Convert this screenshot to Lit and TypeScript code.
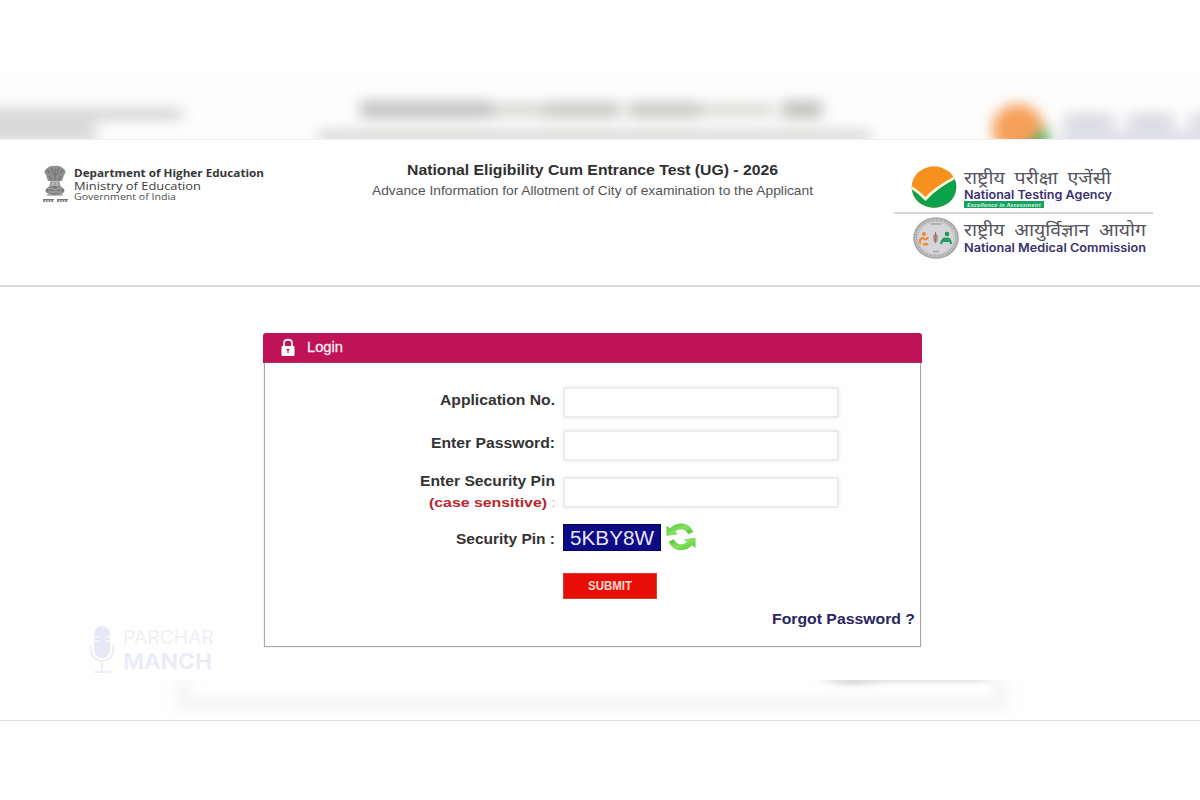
import { LitElement, html, css, svg } from "lit";
import { customElement } from "lit/decorators.js";

/* One line of text whose advance is stretched to a fixed width. */
const line = (text: string, width: number, height: number, base: number, cls: string) => html`
  <svg class="line" width=${width} height=${height} viewBox="0 0 ${width} ${height}">
    <text class=${cls} x="0" y=${base} textLength=${width} lengthAdjust="spacingAndGlyphs">${text}</text>
  </svg>`;

const emblem = html`
  <svg class="emblem" width="26" height="39" viewBox="0 0 26 39">
    <path d="M4 4Q8 0 13 1Q18 0 22 4Q25 7 22 10L20 16H6L4 10Q1 7 4 4Z" fill="#8f8f8f" />
    <path d="M5 5l3 3M21 5l-3 3M9 3l2 4M17 3l-2 4M7 11l3 4M19 11l-3 4M13 4v11M10 9h6" stroke="#707070" stroke-width="1.1" fill="none" />
    <path d="M8 16Q9 19 6 22H20Q17 19 18 16Z" fill="#b4b4b4" />
    <path d="M9 17v4M13 17v4M17 17v4" stroke="#8c8c8c" stroke-width="1" />
    <ellipse cx="13" cy="25.500" rx="9.500" ry="4.600" fill="#7c7c7c" />
    <path d="M6 24q3-2 5 0t4 0t5 0M6 27h14" stroke="#b5b5b5" stroke-width="1" fill="none" />
    <path d="M5 30h16" stroke="#8c8c8c" stroke-width="1.200" />
    <path d="M1 34.500h11M15 34.500h11" stroke="#777" stroke-width="1" />
    <path d="M1 36h11M15 36h11" stroke="#666" stroke-width="1.600" stroke-dasharray="2 .7" />
  </svg>`;

const ntaLogo = html`
  <svg class="nta-logo" width="46" height="42" viewBox="0 0 46 42">
    <defs><clipPath id="disc"><ellipse cx="23" cy="21" rx="22.300" ry="20.700" /></clipPath></defs>
    <g clip-path="url(#disc)">
      <rect width="46" height="42" fill="#f7911e" />
      <path d="M0 20L14.500 33L46 9V42H0Z" fill="#0ba24b" />
      <path d="M-1 20.500Q8 26 14.500 33Q24 22 46 10.500" fill="none" stroke="#fff9dc" stroke-width="2.800" />
    </g>
  </svg>`;

const nmcLogo = html`
  <svg class="nmc-logo" width="46" height="42" viewBox="0 0 46 42">
    <ellipse cx="23" cy="21" rx="22" ry="20" fill="#c9c9cb" stroke="#a6a6a8" stroke-width="1.600" />
    <ellipse cx="23" cy="21" rx="20" ry="18" fill="none" stroke="#a2a2a5" stroke-width="1.500" stroke-dasharray="1.500 1.200" />
    <ellipse cx="23" cy="21" rx="17.500" ry="15.500" fill="#d6d6d9" />
    <path d="M18 7h10M20 34.500h6" stroke="#a2a2a5" stroke-width="1.500" />
    <g fill="none" stroke-width="2.200">
      <path d="M7 27V23Q9 20 11 22Q14 23 15 20M10 28q3-2 5 0" stroke="#ef8b35" />
      <path d="M28 27Q30 20 33 22Q37 20 38 27M30 24h6" stroke="#1d9b62" />
    </g>
    <circle cx="11" cy="17" r="2.100" fill="#ef8b35" />
    <circle cx="34" cy="17" r="2.300" fill="#1d9b62" />
    <ellipse cx="22.500" cy="21" rx="2.300" ry="4.500" fill="#a98f86" />
    <path d="M22.500 15v11" stroke="#8b7a75" stroke-width="1" />
  </svg>`;

const lock = html`
  <svg class="lock" width="14" height="19" viewBox="0 0 14 19">
    <path d="M3 9V5Q3 1.800 7 1.800T11 5V9" fill="none" stroke="#fbe3ec" stroke-width="2" />
    <rect x="0.500" y="8" width="13" height="10" rx="1" fill="#fff" />
    <path d="M5.200 10.800h3.600L7.600 13v2H6.400v-2z" fill="#a3386a" />
  </svg>`;

const half = svg`
  <path d="M0.800 3.200L4 5.600Q8.500 0.700 15 0.700Q23.500 0.700 27 8.800L22.300 11Q19.800 5.900 15 5.900Q11 5.900 8.600 8.800L11.300 10.900L0.800 12.600Z"
    fill="url(#leaf)" stroke="#62cb43" stroke-width="0.500" />`;

const refresh = html`
  <svg class="refresh" width="30" height="28" viewBox="0 0 30 28">
    <defs>
      <linearGradient id="leaf" x1="0" y1="0" x2="1" y2="1">
        <stop offset="0" stop-color="#3fce2c" /><stop offset=".5" stop-color="#8be060" /><stop offset="1" stop-color="#43bf2e" />
      </linearGradient>
    </defs>
    ${half}
    <g transform="rotate(180 15 13.800)">${half}</g>
  </svg>`;

const topHaze = html`
  <svg class="haze" width="1200" height="65" viewBox="0 0 1200 65">
    <defs>
      <filter id="b6" filterUnits="userSpaceOnUse" x="-60" y="-40" width="1320" height="160" color-interpolation-filters="sRGB"><feGaussianBlur stdDeviation="7 6" /></filter>
      <filter id="b4" filterUnits="userSpaceOnUse" x="940" y="-20" width="160" height="140" color-interpolation-filters="sRGB"><feGaussianBlur stdDeviation="6.500" /></filter>
    </defs>
    <rect width="1200" height="65" fill="#fdfdfd" />
    <g filter="url(#b6)">
      <rect x="-40" y="32" width="222" height="14" fill="#dadada" />
      <rect x="-40" y="44" width="136" height="24" fill="#dadada" />
      <rect x="360" y="25" width="132" height="19" fill="#c8c8c8" />
      <rect x="492" y="27" width="52" height="16" fill="#dddddb" />
      <rect x="544" y="26" width="76" height="18" fill="#cfcfcd" />
      <rect x="628" y="26" width="72" height="18" fill="#cfcfcd" />
      <rect x="700" y="28" width="74" height="14" fill="#dededb" />
      <rect x="782" y="25" width="40" height="19" fill="#c6c6c4" />
      <rect x="318" y="54" width="552" height="14" fill="#dcdcdb" />
      <rect x="1064" y="38" width="50" height="26" fill="#dcdce2" />
      <rect x="1128" y="38" width="46" height="26" fill="#dcdce2" />
      <rect x="1190" y="38" width="60" height="26" fill="#dcdce2" />
      <rect x="1060" y="55" width="200" height="20" fill="#e0e0ea" />
    </g>
    <g filter="url(#b4)">
      <ellipse cx="1018" cy="54" rx="26" ry="25" fill="#f6a05a" />
      <path d="M1014 84L1048 50V84Z" fill="#45b268" />
    </g>
    <path d="M0 64.500H1200" stroke="#f0f0f0" />
  </svg>`;

const bottomHaze = html`
  <svg class="haze" width="1200" height="40" viewBox="0 0 1200 40">
    <defs>
      <filter id="c5" filterUnits="userSpaceOnUse" x="120" y="-40" width="960" height="120" color-interpolation-filters="sRGB"><feGaussianBlur stdDeviation="6 5" /></filter>
      <filter id="c3" filterUnits="userSpaceOnUse" x="760" y="-20" width="300" height="60" color-interpolation-filters="sRGB"><feGaussianBlur stdDeviation="10 2.500" /></filter>
    </defs>
    <path d="M184 0V24H1000V0" fill="none" stroke="#f5f5f5" stroke-width="13" filter="url(#c5)" />
    <g filter="url(#c3)">
      <rect x="826" y="-3" width="160" height="5" fill="#dadada" />
      <rect x="838" y="0" width="32" height="5" fill="#d6d6d6" />
    </g>
  </svg>`;

const mic = html`
  <svg class="mic" width="27" height="48" viewBox="0 0 27 48">
    <rect x="5" y="0" width="16" height="32" rx="8" fill="#e6e8f5" />
    <path d="M5 11h5M5 15h5M16 11h5M16 15h5" stroke="#fff" stroke-width="1.200" />
    <path d="M1.500 19V22Q2 34 13 35Q24 34 24.500 22V19M13 35V45M5 46H22" fill="none" stroke="#eaecf5" stroke-width="1.700" />
  </svg>`;

@customElement("app-root")
export class AppRoot extends LitElement {
  static styles = css`
    :host { display: block; width: 1200px; height: 800px; overflow: hidden; background: #fefefe; font-family: "Liberation Sans", Arial, sans-serif; }
    * { box-sizing: border-box; }
    svg { display: block; flex: none; }
    .line { overflow: visible; }
    .page { position: relative; display: flex; flex-direction: column; height: 800px; padding-top: 75px; }
    .haze { overflow: hidden; }

    .top { display: flex; height: 147px; border-bottom: 2px solid #dcdcdc; background: #fefefe; }
    .dept { display: flex; gap: 6px; width: 372px; padding: 25px 0 0 42px; }
    .title { display: flex; flex-direction: column; align-items: center; width: 441px; padding-top: 19px; }
    .bodies { width: 260px; margin-left: 81px; padding-top: 26px; }
    .body-row { display: flex; gap: 7px; padding-left: 17px; }
    .nta { height: 46px; }
    .rule { height: 2px; width: 259px; background: #d3d6d8; }
    .nmc { padding: 3px 0 0 19px; gap: 5px; }
    .tag { display: flex; justify-content: center; width: 80px; height: 7px; background: #17a062; }

    .dep { font: 700 11.300px "Open Sans", sans-serif; fill: #363636; }
    .min { font: 400 11.500px "Open Sans", sans-serif; fill: #3c3c3c; }
    .gov { font: 400 9.800px "Open Sans", sans-serif; fill: #4e4e4e; }
    .h1 { font: 700 14.500px "Liberation Sans", sans-serif; fill: #303030; }
    .h2 { font: 400 12.600px "Liberation Sans", sans-serif; fill: #545454; }
    .hindi { font: 400 17px "Noto Sans Devanagari", "Noto Sans", sans-serif; word-spacing: 4px; fill: #55555f; }
    .en { font: 600 11.600px Inter, sans-serif; fill: #3a326f; }
    .tagt { font: italic 700 6px "Open Sans", sans-serif; fill: #c4ecd4; }

    .card { display: flex; flex-direction: column; width: 659px; height: 314px; margin: 46px 0 0 263px; }
    .card-head { display: flex; gap: 12px; height: 30px; padding: 5px 0 0 18px; border-radius: 3px 3px 0 0; background: #be1356; border-bottom: 1px solid #a3164f; }
    .login { font: 400 14.300px "Liberation Sans", sans-serif; fill: #fbe9f0; stroke: #fbe9f0; stroke-width: 0.300px; }
    .form { width: 657px; margin-left: 0.500px; height: 284px; padding-top: 24px; border: 1.500px solid #b3a4ab; border-top: 0; border-right-color: #a9a5a9; border-bottom-color: #a8a8aa; box-shadow: 0 0 1px #c9c2c6; }
    .row { display: flex; gap: 8px; margin-bottom: 12px; }
    .tight { margin-bottom: 8px; }
    .pin .input { margin-top: 8px; }
    .label { display: flex; flex-direction: column; align-items: flex-end; width: 290px; }
    .input { width: 276px; height: 31px; border: 2px solid #ebebeb; border-radius: 2px; background: #fff; box-shadow: 0 0 4px #eeeeee; }
    .lb { font: 700 13.800px "Liberation Sans", sans-serif; fill: #343434; }
    .case { display: flex; gap: 5px; }
    .red { font: 700 13.500px "Liberation Sans", sans-serif; fill: #b8262f; }
    .dim { font: 400 12px "Liberation Sans", sans-serif; fill: #999; }
    .captcha-row { height: 27px; margin-bottom: 22px; }
    .captcha { display: flex; justify-content: center; width: 98px; height: 27px; background: #0d0a85; border: 1px solid #06065f; }
    .cap { font: 400 20px "Liberation Sans", sans-serif; fill: #e6e6f5; }
    .refresh { margin: -1px 0 0 -3px; }
    .submit { display: flex; justify-content: center; width: 94px; height: 26px; margin-left: 298px; background: #e80e08; border: 1px solid #d4402f; }
    .sub { font: 700 12px "Liberation Sans", sans-serif; fill: #ffd9d3; }
    .forgot { display: flex; justify-content: flex-end; padding: 9px 5px 0 0; }
    .fg { font: 700 14.500px "Liberation Sans", sans-serif; fill: #29255f; }

    .foot { margin-top: 33px; border-bottom: 1px solid #e2e2e2; height: 41px; }
    .mark { position: absolute; left: 89px; top: 626px; display: flex; gap: 7px; }
    .mark-lines { display: flex; flex-direction: column; }
    .m1 { font: 400 19px Inter, sans-serif; fill: #f0f0f4; }
    .m2 { font: 600 21.500px Inter, sans-serif; fill: #e9ebf6; }
  `;

  render() {
    return html`
      <div class="page">
        ${topHaze}
        <header class="top">
          <div class="dept">
            ${emblem}
            <div class="dept-lines">
              ${line("Department of Higher Education", 190, 13, 12, "dep")}
              ${line("Ministry of Education", 127, 12, 11.5, "min")}
              ${line("Government of India", 102, 11, 10.3, "gov")}
            </div>
          </div>
          <div class="title">
            ${line("National Eligibility Cum Entrance Test (UG) - 2026", 371, 20, 16, "h1")}
            ${line("Advance Information for Allotment of City of examination to the Applicant", 441, 20, 16, "h2")}
          </div>
          <div class="bodies">
            <div class="body-row nta">
              ${ntaLogo}
              <div>
                ${line("राष्ट्रीय परीक्षा एजेंसी", 147, 20, 18, "hindi")}
                ${line("National Testing Agency", 148, 15, 13, "en")}
                <div class="tag">${line("Excellence in Assessment", 74, 7, 5.7, "tagt")}</div>
              </div>
            </div>
            <div class="rule"></div>
            <div class="body-row nmc">
              ${nmcLogo}
              <div>
                ${line("राष्ट्रीय आयुर्विज्ञान आयोग", 182, 20, 19, "hindi")}
                ${line("National Medical Commission", 182, 15, 14.5, "en")}
              </div>
            </div>
          </div>
        </header>

        <section class="card">
          <div class="card-head">${lock}${line("Login", 36, 20, 13.5, "login")}</div>
          <div class="form">
            <div class="row">
              <div class="label">${line("Application No.", 115, 31, 18, "lb")}</div>
              <div class="input"></div>
            </div>
            <div class="row tight">
              <div class="label">${line("Enter Password:", 124, 31, 18, "lb")}</div>
              <div class="input"></div>
            </div>
            <div class="row tight pin">
              <div class="label">
                ${line("Enter Security Pin", 135, 21, 17, "lb")}
                <div class="case">${line("(case sensitive)", 118, 26, 16.5, "red")}${line(":", 3, 26, 16.5, "dim")}</div>
              </div>
              <div class="input"></div>
            </div>
            <div class="row captcha-row">
              <div class="label">${line("Security Pin :", 99, 27, 20, "lb")}</div>
              <div class="captcha">${line("5KBY8W", 84, 25, 19.5, "cap")}</div>
              ${refresh}
            </div>
            <div class="submit">${line("SUBMIT", 44, 24, 16.3, "sub")}</div>
            <div class="forgot">${line("Forgot Password ?", 143, 20, 16, "fg")}</div>
          </div>
        </section>

        <footer class="foot">${bottomHaze}</footer>
        <div class="mark">
          ${mic}
          <div class="mark-lines">
            ${line("PARCHAR", 91, 22, 18, "m1")}
            ${line("MANCH", 89, 24, 20.5, "m2")}
          </div>
        </div>
      </div>
    `;
  }
}
